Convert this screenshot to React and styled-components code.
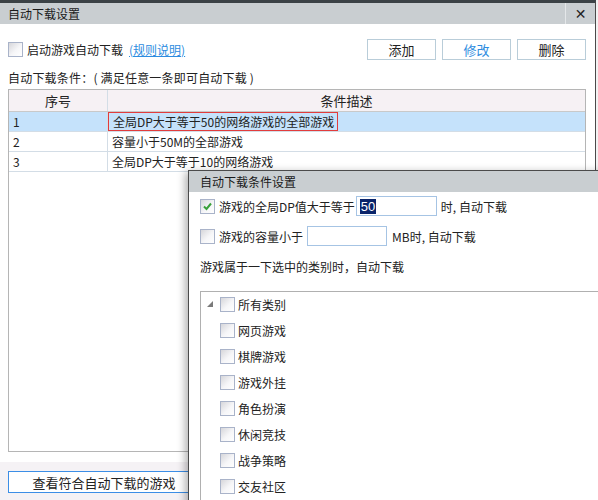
import React from 'react'
import styled, { createGlobalStyle } from 'styled-components'

const Global = createGlobalStyle`
  html, body {
    margin: 0;
    padding: 0;
    background: #f2f2f2;
    overflow: hidden;
  }
  body {
    font-family: 'Noto Sans CJK SC', 'Liberation Sans', sans-serif;
    font-size: 12px;
    color: #222;
  }
`

const Screen = styled.div`
  position: relative;
  width: 598px;
  height: 500px;
  overflow: hidden;
`

const Window = styled.div`
  width: 595px;
  height: 497px;
  background: #fff;
  border-top: 3px solid #3b4246;
  border-right: 1px solid #4a4a4a;
  display: flex;
  flex-direction: column;
`

const TitleBar = styled.div`
  height: 21px;
  flex: none;
  background: #c9ced1;
  display: flex;
  align-items: center;
  justify-content: space-between;
  padding-left: ${p => p.$pad || 8}px;
  font-size: 12px;
  color: #1a1a1a;
`

const CloseBtn = styled.div`
  width: 29px;
  height: 21px;
  border-left: 1px solid #e4e7e9;
  display: flex;
  align-items: center;
  justify-content: center;
  font-family: 'DejaVu Sans', sans-serif;
  font-weight: 700;
  font-size: 14px;
  color: #222;
`

const Body = styled.div`
  flex: 1;
  display: flex;
  flex-direction: column;
  padding: 0 9px 0 8px;
`

const TopRow = styled.div`
  display: flex;
  align-items: center;
  justify-content: space-between;
  margin-top: 14px;
  height: 22px;
`

const CheckLabel = styled.label`
  display: flex;
  align-items: center;
  gap: ${p => p.$gap || 4}px;
  white-space: nowrap;
`

const Box = styled.span`
  width: 13px;
  height: 13px;
  flex: none;
  border: 1px solid #a9b3c9;
  background: linear-gradient(135deg, #d6d6da 0%, #f6f6f8 55%, #fff 100%);
  display: inline-flex;
  align-items: center;
  justify-content: center;
`

const Link = styled.span`
  color: #2d8ce0;
  text-decoration: underline;
  margin-left: 2px;
`

const Buttons = styled.div`
  display: flex;
  gap: 6px;
`

const Button = styled.div`
  width: 67px;
  height: 19px;
  border: 1px solid #b9cdd9;
  display: flex;
  align-items: center;
  justify-content: center;
  font-size: 13px;
  color: ${p => (p.$active ? '#2d8ce0' : '#222')};
`

const Caption = styled.div`
  margin-top: 8px;
  height: 21px;
  line-height: 20px;
  letter-spacing: 0.2px;
`

const Table = styled.div`
  height: 361px;
  border: 1px solid #b5b5b5;
  display: flex;
  flex-direction: column;
`

const Row = styled.div`
  display: grid;
  grid-template-columns: 99px 1fr;
  height: ${p => (p.$head ? 21 : 19)}px;
  flex: none;
  background: ${p => (p.$head ? '#f6f1f4' : p.$selected ? '#c5e2fb' : '#fff')};
  border-bottom: 1px solid ${p => (p.$head ? '#c9c9c9' : '#d3dde6')};
`

const Cell = styled.div`
  display: flex;
  align-items: center;
  justify-content: ${p => (p.$center ? 'center' : 'flex-start')};
  padding-left: ${p => (p.$center ? 0 : 4)}px;
  border-right: ${p => (p.$first ? '1px solid #d3dde6' : 'none')};
  font-size: ${p => (p.$center ? 13 : 12)}px;
  white-space: nowrap;
`

const Focus = styled.span`
  display: inline-flex;
  align-items: center;
  height: 17px;
  margin-left: -4px;
  padding: 0 3px 0 4px;
  border: 1px solid #e23c3c;
`

const Footer = styled.div`
  margin: 10px -9px 0 -8px;
  flex: 1;
  background: #f5f2f5;
  padding: 9px 8px;
`

const WideButton = styled.div`
  width: 190px;
  height: 20px;
  background: #fff;
  border: 1px solid #3c8ee6;
  display: flex;
  align-items: center;
  justify-content: center;
  font-size: 13px;
`

/* overlapping child window */
const Dialog = styled.div`
  position: absolute;
  left: 188px;
  top: 170px;
  width: 430px;
  height: 340px;
  background: #fff;
  border: 1px solid #4b4b4b;
  box-shadow: -3px 2px 8px rgba(0, 0, 0, 0.3);
  display: flex;
  flex-direction: column;
`

const DialogBody = styled.div`
  padding: 3px 0 0 11px;
  display: flex;
  flex-direction: column;
`

const FieldRow = styled.div`
  display: flex;
  align-items: center;
  height: 22px;
  margin-bottom: 8px;
  white-space: nowrap;
`

const Input = styled.div`
  width: ${p => p.$w}px;
  height: 20px;
  border: 1px solid #a6c4e4;
  margin: 0 ${p => p.$mr}px 0 ${p => p.$ml}px;
  display: flex;
  align-items: center;
  padding-left: 3px;
  box-sizing: border-box;
`

const Selected = styled.span`
  background: #0a246a;
  color: #fff;
  font-family: 'Liberation Sans', sans-serif;
  font-size: 13px;
  line-height: 15px;
  padding: 0 1px;
`

const Note = styled.div`
  height: 22px;
  display: flex;
  align-items: center;
`

const Tree = styled.div`
  margin-top: 14px;
  border-top: 1px solid #b0b0b0;
  border-left: 1px solid #b0b0b0;
  height: 220px;
  padding: 5px 0 0 5px;
  display: flex;
  flex-direction: column;
`

const TreeItem = styled.div`
  display: flex;
  align-items: center;
  height: 26px;
  padding-left: ${p => (p.$child ? 14 : 0)}px;
  margin-top: ${p => (p.$root ? -6 : 0)}px;
`

const Arrow = styled.span`
  width: 0;
  height: 0;
  border-left: 6px solid transparent;
  border-bottom: 6px solid #7a7a7a;
  margin: 0 7px 0 1px;
`

const Check = () => (
  <svg width="11" height="11" viewBox="0 0 11 11">
    <path d="M2 5.5 L4.5 8 L9 2.5" fill="none" stroke="#3aa03a" strokeWidth="2" />
  </svg>
)

const rows = [
  { n: '1', text: '全局DP大于等于50的网络游戏的全部游戏', selected: true },
  { n: '2', text: '容量小于50M的全部游戏' },
  { n: '3', text: '全局DP大于等于10的网络游戏' },
]

const cats = ['网页游戏', '棋牌游戏', '游戏外挂', '角色扮演', '休闲竞技', '战争策略', '交友社区']

export default function App() {
  return (
    <Screen>
      <Global />
      <Window>
        <TitleBar>
          <span>自动下载设置</span>
          <CloseBtn>✕</CloseBtn>
        </TitleBar>
        <Body>
          <TopRow>
            <CheckLabel>
              <Box />
              <span>启动游戏自动下载</span>
              <Link>(规则说明)</Link>
            </CheckLabel>
            <Buttons>
              <Button>添加</Button>
              <Button $active>修改</Button>
              <Button>删除</Button>
            </Buttons>
          </TopRow>
          <Caption>自动下载条件：( 满足任意一条即可自动下载 )</Caption>
          <Table>
            <Row $head>
              <Cell $center $first>序号</Cell>
              <Cell $center>条件描述</Cell>
            </Row>
            {rows.map(r => (
              <Row key={r.n} $selected={r.selected}>
                <Cell $first>{r.n}</Cell>
                <Cell>{r.selected ? <Focus>{r.text}</Focus> : r.text}</Cell>
              </Row>
            ))}
          </Table>
          <Footer>
            <WideButton>查看符合自动下载的游戏</WideButton>
          </Footer>
        </Body>
      </Window>

      <Dialog>
        <TitleBar $pad={11}>
          <span>自动下载条件设置</span>
        </TitleBar>
        <DialogBody>
          <FieldRow>
            <CheckLabel>
              <Box>
                <Check />
              </Box>
              <span>游戏的全局DP值大于等于</span>
            </CheckLabel>
            <Input $w={81} $ml={1} $mr={4}>
              <Selected>50</Selected>
            </Input>
            <span>时, 自动下载</span>
          </FieldRow>
          <FieldRow>
            <CheckLabel>
              <Box />
              <span>游戏的容量小于</span>
            </CheckLabel>
            <Input $w={80} $ml={4} $mr={5} />
            <span>MB时, 自动下载</span>
          </FieldRow>
          <Note>游戏属于一下选中的类别时，自动下载</Note>
          <Tree>
            <TreeItem $root>
              <Arrow />
              <CheckLabel $gap={3}>
                <Box />
                <span>所有类别</span>
              </CheckLabel>
            </TreeItem>
            {cats.map(c => (
              <TreeItem key={c} $child>
                <CheckLabel $gap={3}>
                  <Box />
                  <span>{c}</span>
                </CheckLabel>
              </TreeItem>
            ))}
          </Tree>
        </DialogBody>
      </Dialog>
    </Screen>
  )
}
